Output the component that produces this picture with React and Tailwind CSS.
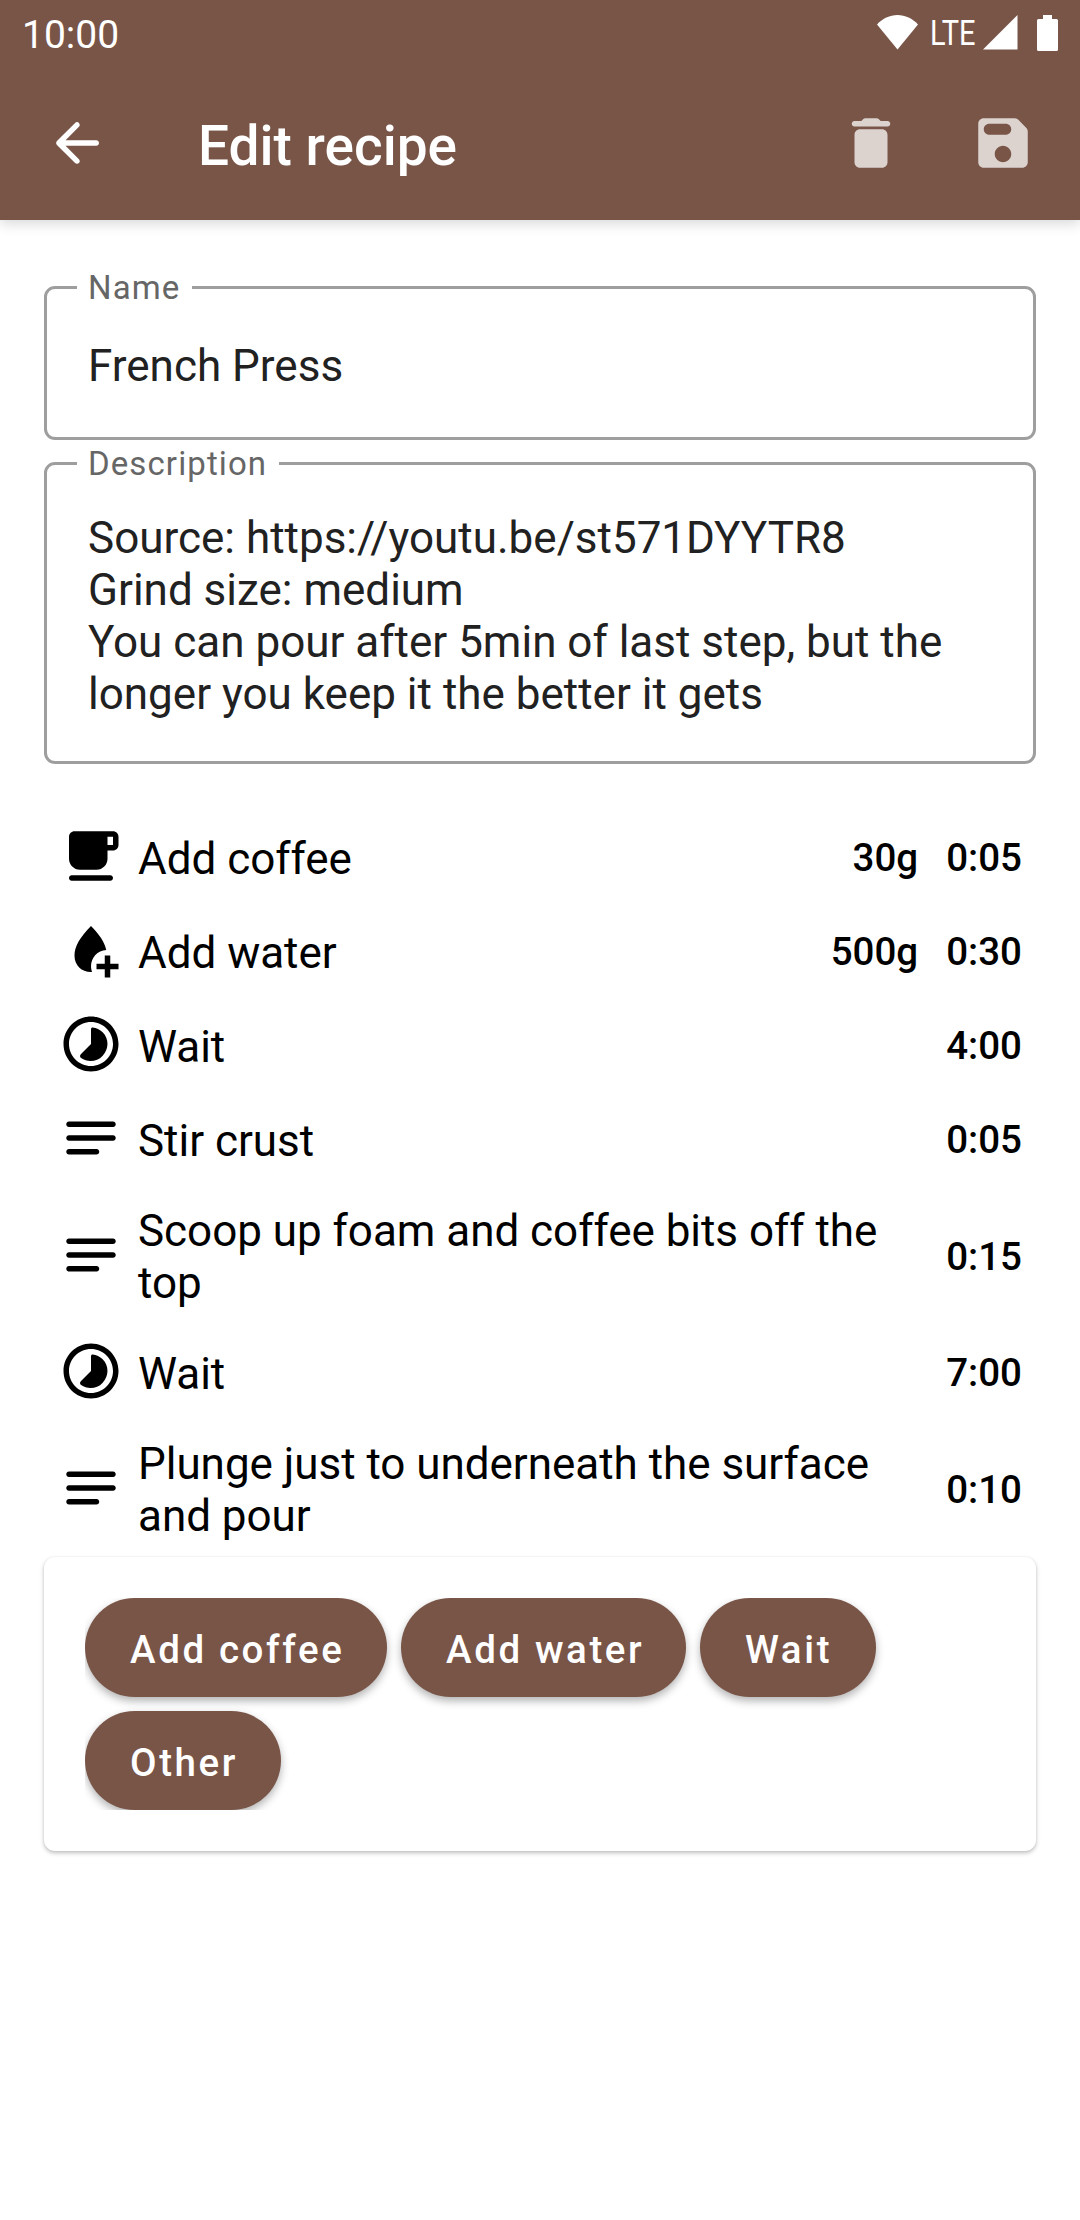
const ICONS = {
  back: "M19 11H7.83l4.88-4.88c.39-.39.39-1.03 0-1.42-.39-.39-1.02-.39-1.41 0l-6.59 6.59c-.39.39-.39 1.02 0 1.41l6.59 6.59c.39.39 1.02.39 1.41 0 .39-.39.39-1.02 0-1.41L7.83 13H19c.55 0 1-.45 1-1s-.45-1-1-1z",
  trash:
    "M6 19c0 1.1.9 2 2 2h8c1.1 0 2-.9 2-2V9c0-1.1-.9-2-2-2H8c-1.1 0-2 .9-2 2v10zM18 4h-2.5l-.71-.71c-.18-.18-.44-.29-.7-.29H9.91c-.26 0-.52.11-.7.29L8.5 4H6c-.55 0-1 .45-1 1s.45 1 1 1h12c.55 0 1-.45 1-1s-.45-1-1-1z",
  save: "M17.59 3.59c-.38-.38-.89-.59-1.42-.59H5c-1.11 0-2 .9-2 2v14c0 1.1.9 2 2 2h14c1.1 0 2-.9 2-2V7.83c0-.53-.21-1.04-.59-1.41l-2.82-2.83zM12 19c-1.66 0-3-1.34-3-3s1.34-3 3-3 3 1.34 3 3-1.34 3-3 3zm1-10H7c-1.1 0-2-.9-2-2s.9-2 2-2h6c1.1 0 2 .9 2 2s-.9 2-2 2z",
  coffee:
    "M20 3H6c-1.1 0-2 .9-2 2v8c0 2.21 1.79 4 4 4h6c2.21 0 4-1.79 4-4v-3h2c1.11 0 2-.89 2-2V5c0-1.11-.89-2-2-2zm0 5h-2V5h2v3zM5 19h14c.55 0 1 .45 1 1s-.45 1-1 1H5c-.55 0-1-.45-1-1s.45-1 1-1z",
  water:
    "M17.55 12.03C16.85 8.9 14.9 6.3 12 3.3 8.1 7.3 6 10.6 6 14.1c0 3.5 2.55 5.9 6 5.9.12 0 .24 0 .36-.01A6.2 6.2 0 0 1 12 18c0-3.2 2.4-5.8 5.55-5.97zM17 14h2v3h3v2h-3v3h-2v-3h-3v-2h3z",
  wait: "M16.24 7.76c-1-1-2.29-1.6-3.62-1.73-.33-.03-.62.24-.62.57V12l-3.7 3.7c-.42.42-.37 1.07.1 1.4 2.35 1.65 5.74 1.5 7.85-.86 2.33-2.34 2.33-6.14-.01-8.48zM12 2C6.48 2 2 6.48 2 12s4.48 10 10 10 10-4.48 10-10S17.52 2 12 2zm0 18c-4.42 0-8-3.58-8-8s3.58-8 8-8 8 3.58 8 8-3.58 8-8 8z",
  other:
    "M20 11H4c-.55 0-1 .45-1 1s.45 1 1 1h16c.55 0 1-.45 1-1s-.45-1-1-1zM4 18h10c.55 0 1-.45 1-1s-.45-1-1-1H4c-.55 0-1 .45-1 1s.45 1 1 1zM20 6H4c-.55 0-1 .45-1 1s.45 1 1 1h16c.55 0 1-.45 1-1s-.45-1-1-1z",
};

function Icon({ name, className = "" }) {
  return (
    <svg viewBox="0 0 24 24" className={"size-[66px] shrink-0 fill-current " + className}>
      <path d={ICONS[name]} />
    </svg>
  );
}

function StatusBar() {
  return (
    <div className="flex h-[66px] items-start justify-between px-[22px]">
      <span className="pt-[11px] text-[39px] leading-[48px]">10:00</span>
      <div className="flex pt-[15px]">
        <svg viewBox="0 0 41 35" className="h-[35px] w-[41px] fill-white">
          <path d="M0 9.5C5.6 3.4 12.8 0 20.5 0S35.4 3.4 41 9.5L20.5 34.5z" />
        </svg>
        <span className="mr-[3px] ml-[12px] w-[50px] origin-left scale-x-[0.84] text-[34.5px] leading-[36px]">
          LTE
        </span>
        <svg viewBox="0 0 35 35" className="h-[35px] w-[35px] fill-white">
          <path d="M34.500 0V34.500H0z" />
        </svg>
        <svg viewBox="0 0 21 36" className="ml-[19px] h-[36px] w-[21px] fill-white">
          <path d="M6 0h9v4h4.500q1.500 0 1.500 1.500v29q0 1.500-1.500 1.500h-18q-1.500 0-1.500-1.500v-29q0-1.500 1.500-1.500H6z" />
        </svg>
      </div>
    </div>
  );
}

function Header() {
  return (
    <header className="h-[220px] bg-[#795548] text-white shadow-[0_4px_12px_rgba(0,0,0,0.15)]">
      <StatusBar />
      <div className="flex h-[154px] items-center px-[44px]">
        <Icon name="back" />
        <h1 className="ml-[88px] flex-1 pt-[6px] text-[55px] leading-[66px] font-medium">Edit recipe</h1>
        <Icon name="trash" className="mr-[66px] text-white/74" />
        <Icon name="save" className="text-white/74" />
      </div>
    </header>
  );
}

function Field({ label, children, className }) {
  return (
    <fieldset
      className={"min-w-0 rounded-[11px] border-[3px] border-[#9e9e9e] pl-[30px] text-[#212121] " + className}
    >
      <legend className="h-[39px] pr-[12px] pl-[11px] text-[33px] leading-[39px] tracking-[1.1px] text-[#666]">
        {label}
      </legend>
      <div className="pl-[11px] text-[44px] leading-[52px] whitespace-pre-line">{children}</div>
    </fieldset>
  );
}

const STEPS = [
  { icon: "coffee", text: "Add coffee", weight: "30g", time: "0:05" },
  { icon: "water", text: "Add water", weight: "500g", time: "0:30" },
  { icon: "wait", text: "Wait", time: "4:00" },
  { icon: "other", text: "Stir crust", time: "0:05" },
  { icon: "other", text: "Scoop up foam and coffee bits off the\ntop", time: "0:15" },
  { icon: "wait", text: "Wait", time: "7:00" },
  { icon: "other", text: "Plunge just to underneath the surface\nand pour", time: "0:10" },
];

function Step({ icon, text, weight, time }) {
  return (
    <li className="flex items-center px-[14px] py-[14px]">
      <Icon name={icon} />
      <span className="ml-[14px] flex-1 pt-[6px] pb-px text-[44px] leading-[52px] tracking-[-0.03px] whitespace-pre">
        {text}
      </span>
      <span className="pt-[4px] text-[38.5px] leading-[46px] font-medium">{weight}</span>
      <span className="ml-[28px] pt-[4px] text-[38.5px] leading-[46px] font-medium">{time}</span>
    </li>
  );
}

const ACTIONS = [
  { label: "Add coffee", width: "w-[302px]" },
  { label: "Add water", width: "w-[285px]" },
  { label: "Wait", width: "w-[176px]" },
  { label: "Other", width: "w-[196px]" },
];

export default function App() {
  return (
    <div className="h-[2220px] w-[1080px] overflow-hidden bg-white font-['Roboto',sans-serif] text-black">
      <Header />
      <main className="flex flex-col px-[44px] pt-[48px]">
        <Field label="Name" className="h-[172px]">
          <div className="pt-[33px]">French Press</div>
        </Field>
        <Field label="Description" className="mt-1 h-[320px]">
          <div className="pt-[29px]">
            {"Source: https://youtu.be/st571DYYTR8\nGrind size: medium\nYou can pour after 5min of last step, but the\nlonger you keep it the better it gets"}
          </div>
        </Field>
        <ul className="mt-[45px] flex flex-col">
          {STEPS.map((step, i) => (
            <Step key={i} {...step} />
          ))}
        </ul>
        <section className="rounded-[11px] p-[41px] shadow-[0_2px_4px_rgba(0,0,0,0.26),0_0_2px_rgba(0,0,0,0.06)]">
          <div className="flex flex-wrap gap-[14px] overflow-hidden">
            {ACTIONS.map(({ label, width }) => (
              <button
                key={label}
                className={
                  "h-[99px] rounded-full bg-[#795548] pt-[4px] pl-[45px] text-left text-[38.5px] leading-[46px] font-medium tracking-[2.6px] whitespace-nowrap text-white shadow-[0_4px_8px_rgba(0,0,0,0.3)] " +
                  width
                }
              >
                {label}
              </button>
            ))}
          </div>
        </section>
      </main>
    </div>
  );
}
